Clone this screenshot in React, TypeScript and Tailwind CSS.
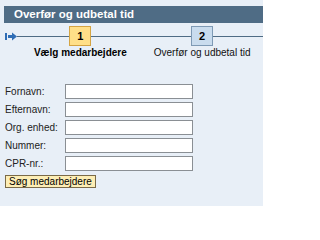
import React from "react";

const fields = ["Fornavn:", "Efternavn:", "Org. enhed:", "Nummer:", "CPR-nr.:"];

export default function App() {
  return (
    <div className="w-[263px] h-[206px] overflow-hidden bg-[#e8eff7] pt-[6px] font-['Liberation_Sans',Arial,sans-serif]">
      <div className="ml-[4px] h-[17px] bg-[#4f6c85] pl-[10px] flex items-center text-white font-bold text-[11.5px] leading-none whitespace-nowrap">
        Overfør og udbetal tid
      </div>

      <div className="relative mt-[3px]">
        <div className="absolute left-[17px] right-0 top-[10px] h-px bg-[#4f6c85]" />
        <svg className="absolute left-[5px] top-[6px]" width="13" height="9" viewBox="0 0 13 9">
          <rect x="0" y="1" width="2" height="7" fill="#2f6db5" />
          <path d="M3 3 H7 V0.5 L12 4.5 L7 8.5 V6 H3 Z" fill="#2f6db5" />
        </svg>
        <div className="flex">
          <div className="w-[20px]" />
          <div className="w-[125px] flex flex-col items-center">
            <div className="relative w-[22px] h-[20px] bg-[#ffdf88] border border-[#d4a443] flex items-center justify-center text-[11px] font-bold text-black leading-none">
              1
            </div>
            <div className="mt-[1px] text-[10px] leading-[12px] font-bold text-black whitespace-nowrap">
              Vælg medarbejdere
            </div>
          </div>
          <div className="w-[125px] flex flex-col items-center">
            <div className="relative w-[22px] h-[20px] bg-[#c9dcee] border border-[#7e9ab5] flex items-center justify-center text-[11px] font-bold text-black leading-none">
              2
            </div>
            <div className="mt-[1px] text-[10px] leading-[12px] text-[#111] whitespace-nowrap">
              Overfør og udbetal tid
            </div>
          </div>
        </div>
      </div>

      <div className="mt-[25px] pl-[5px]">
        <div className="grid grid-cols-[60px_128px] gap-y-[3px]">
          {fields.map((f) => (
            <React.Fragment key={f}>
              <div className="h-[15px] flex items-center text-[10px] text-[#222] leading-none whitespace-nowrap">
                {f}
              </div>
              <input
                type="text"
                className="h-[15px] w-[128px] bg-white border border-[#8a8f94] outline-none"
              />
            </React.Fragment>
          ))}
        </div>
        <button className="mt-[4px] h-[13px] px-[3px] bg-[#fdeeb5] border border-[#7a6a48] text-[10px] leading-none text-black flex items-center whitespace-nowrap">
          Søg medarbejdere
        </button>
      </div>
    </div>
  );
}
